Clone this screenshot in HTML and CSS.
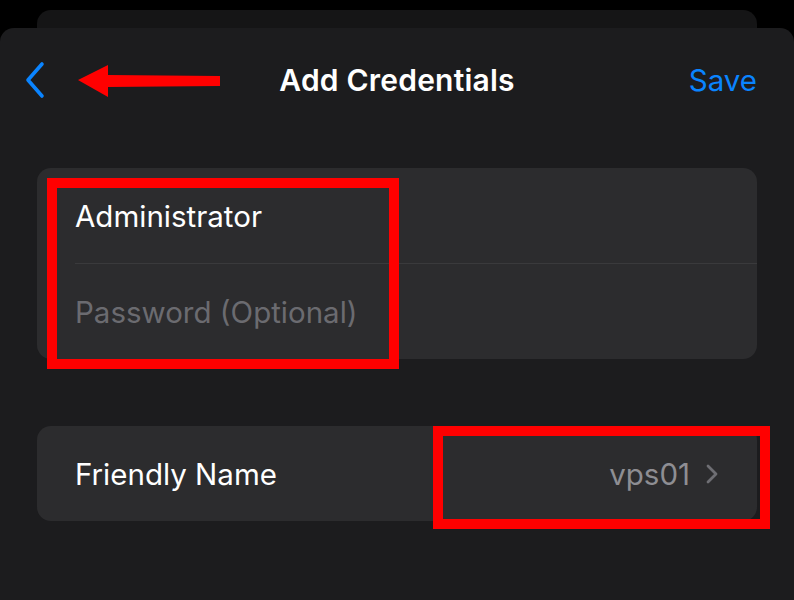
FILE: index.html
```html
<!DOCTYPE html>
<html>
<head>
<meta charset="utf-8">
<link rel="stylesheet" href="styles.css">
</head>
<body>
<div class="screen">
  <div class="back-card"></div>
  <div class="sheet">
    <div class="nav">
      <div class="nav-left">
        <svg class="back-chevron" width="24" height="40" viewBox="0 0 24 40">
          <polyline points="18,4 4,20 18,36" fill="none" stroke="#0a84ff" stroke-width="3.6" stroke-linecap="round" stroke-linejoin="round"/>
        </svg>
      </div>
      <div class="nav-title">Add Credentials</div>
      <div class="nav-right">Save</div>
    </div>
    <div class="group">
      <div class="row"><span class="value">Administrator</span></div>
      <div class="sep"></div>
      <div class="row"><span class="placeholder">Password (Optional)</span></div>
    </div>
    <div class="group group-2">
      <div class="row row-split">
        <span class="value">Friendly Name</span>
        <span class="detail">vps01
          <svg class="disclosure" width="14" height="24" viewBox="0 0 14 24">
            <polyline points="3,4 11,12 3,20" fill="none" stroke="#6e6e73" stroke-width="2.8" stroke-linecap="round" stroke-linejoin="round"/>
          </svg>
        </span>
      </div>
    </div>
  </div>
  <svg class="anno-arrow" width="150" height="36" viewBox="0 0 150 36">
    <polygon points="0,15 30,0 30,10 142,11 142,21 30,22 30,32" fill="#ff0000"/>
  </svg>
  <div class="anno-box anno-box-1"></div>
  <div class="anno-box anno-box-2"></div>
</div>
</body>
</html>
```
FILE: styles.css
```css
html, body {
  margin: 0;
  padding: 0;
  background: #000;
}
.screen {
  position: relative;
  width: 794px;
  height: 600px;
  overflow: hidden;
  padding-top: 10px;
  box-sizing: border-box;
  font-family: Inter, "Noto Sans", "Liberation Sans", sans-serif;
}
.back-card {
  margin: 0 37px;
  height: 18px;
  background: #151516;
  border-radius: 14px 14px 0 0;
}
.sheet {
  background: #1c1c1e;
  border-radius: 14px 14px 0 0;
  height: 572px;
  padding: 0 37px;
  box-sizing: border-box;
}
.nav {
  height: 104px;
  display: flex;
  align-items: center;
  justify-content: space-between;
  position: relative;
}
.nav-left {
  width: 60px;
  display: flex;
  align-items: center;
  margin-left: -13px;
}
.back-chevron {
  display: block;
}
.nav-title {
  position: absolute;
  left: 0;
  right: 0;
  text-align: center;
  color: #fff;
  font-size: 30px;
  font-weight: 600;
  letter-spacing: 0.2px;
  pointer-events: none;
}
.nav-right {
  color: #0a84ff;
  font-size: 29.5px;
  font-weight: 400;
}
.group {
  margin-top: 36px;
  background: #2c2c2e;
  border-radius: 14px;
  overflow: hidden;
}
.group-2 {
  margin-top: 67px;
}
.row {
  height: 95px;
  display: flex;
  align-items: center;
  padding: 0 38px;
  font-size: 29.5px;
}
.sep {
  height: 1px;
  background: #3a3a3c;
  margin-left: 38px;
}
.value {
  color: #fff;
}
.placeholder {
  color: #6b6b70;
}
.row-split {
  justify-content: space-between;
  padding-right: 38px;
}
.detail {
  color: #8e8e93;
  display: flex;
  align-items: center;
  gap: 15px;
}
.disclosure {
  display: block;
}
.anno-arrow {
  position: absolute;
  left: 78px;
  top: 65px;
}
.anno-box {
  position: absolute;
  border: 10px solid #ff0000;
  box-sizing: border-box;
}
.anno-box-1 {
  left: 47px;
  top: 178px;
  width: 352px;
  height: 191px;
}
.anno-box-2 {
  left: 433px;
  top: 426px;
  width: 337px;
  height: 103px;
}
```
